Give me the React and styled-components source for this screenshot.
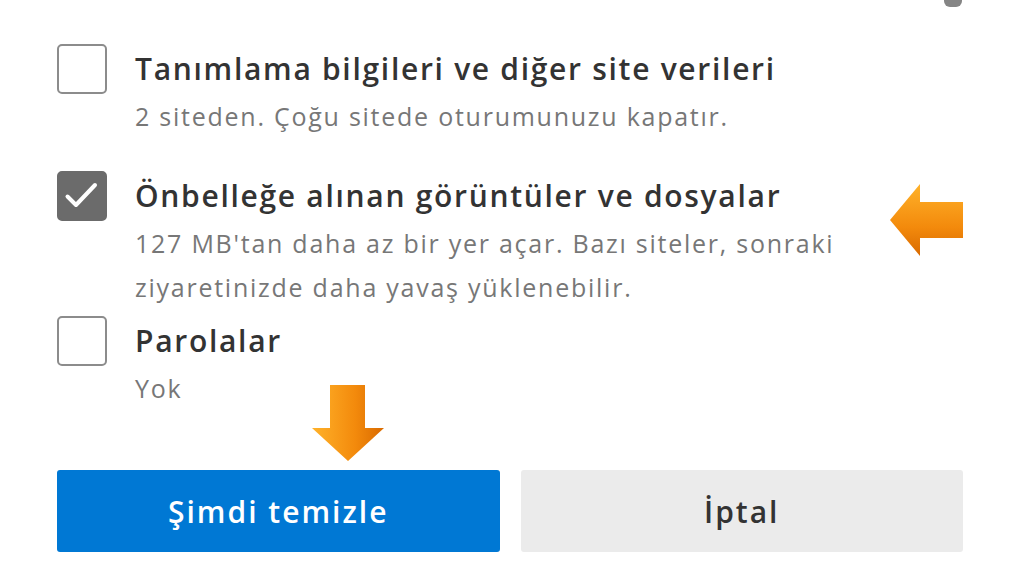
import React from "react";
import styled, { createGlobalStyle } from "styled-components";

const GlobalStyle = createGlobalStyle`
  html, body {
    margin: 0;
    padding: 0;
    background: #ffffff;
  }
  body {
    font-family: "Open Sans", "Noto Sans", "Liberation Sans", sans-serif;
  }
`;

const items = [
  {
    title: "Tanımlama bilgileri ve diğer site verileri",
    lines: ["2 siteden. Çoğu sitede oturumunuzu kapatır."],
    checked: false,
    space: 44,
  },
  {
    title: "Önbelleğe alınan görüntüler ve dosyalar",
    lines: [
      "127 MB'tan daha az bir yer açar. Bazı siteler, sonraki",
      "ziyaretinizde daha yavaş yüklenebilir.",
    ],
    checked: true,
    space: 33,
  },
  {
    title: "Parolalar",
    lines: ["Yok"],
    checked: false,
    space: 7,
  },
];

const App = () => {
  return (
    <>
      <GlobalStyle />
      <Page>
        <Dialog>
          <List>
            {items.map((item) => (
              <Row key={item.title} space={item.space}>
                <Check checked={item.checked}>
                  {item.checked && (
                    <svg width="40" height="40" viewBox="0 0 40 40">
                      <path
                        d="M5.5 20.5 L14 29 L33 9"
                        fill="none"
                        stroke="#ffffff"
                        strokeWidth="4"
                        strokeLinecap="round"
                        strokeLinejoin="round"
                      />
                    </svg>
                  )}
                </Check>
                <Texts>
                  <Title>{item.title}</Title>
                  {item.lines.map((line) => (
                    <Sub key={line}>{line}</Sub>
                  ))}
                </Texts>
              </Row>
            ))}
          </List>
          <Buttons>
            <Button primary>Şimdi temizle</Button>
            <Button>İptal</Button>
          </Buttons>
        </Dialog>

        <Corner />

        <LeftArrow width="76" height="76" viewBox="0 0 76 76">
          <defs>
            <linearGradient id="gl" x1="0" y1="0" x2="0" y2="1">
              <stop offset="0" stopColor="#ffb22a" />
              <stop offset="0.6" stopColor="#f38a0c" />
              <stop offset="1" stopColor="#d96a00" />
            </linearGradient>
          </defs>
          <path
            d="M2 37 L32 1 L32 19 L75 19 L75 55 L32 55 L32 73 Z"
            fill="url(#gl)"
          />
        </LeftArrow>

        <DownArrow width="76" height="78" viewBox="0 0 76 78">
          <defs>
            <linearGradient id="gd" x1="0" y1="0" x2="1" y2="0">
              <stop offset="0" stopColor="#ffb22a" />
              <stop offset="0.6" stopColor="#f38a0c" />
              <stop offset="1" stopColor="#d96a00" />
            </linearGradient>
          </defs>
          <path
            d="M19 1 L54 1 L54 44 L73 44 L37 77 L1 44 L19 44 Z"
            fill="url(#gd)"
          />
        </DownArrow>
      </Page>
    </>
  );
};

export default App;

const Page = styled.div`
  position: relative;
  width: 1024px;
  height: 576px;
  overflow: hidden;
  background: #ffffff;
`;

const Dialog = styled.div`
  width: 906px;
  padding-left: 57px;
  display: flex;
  flex-direction: column;
`;

const List = styled.div`
  display: flex;
  flex-direction: column;
`;

const Row = styled.div`
  display: flex;
  align-items: flex-start;
  gap: 28px;
  margin-top: ${({ space }) => space}px;
`;

const Check = styled.div`
  box-sizing: border-box;
  flex: none;
  width: 50px;
  height: 50px;
  border-radius: 5px;
  border: 2px solid ${({ checked }) => (checked ? "#6b6b6b" : "#8c8c8c")};
  background: ${({ checked }) => (checked ? "#6b6b6b" : "#ffffff")};
  display: flex;
  align-items: center;
  justify-content: center;
`;

const Texts = styled.div`
  display: flex;
  flex-direction: column;
`;

const Title = styled.div`
  font-size: 30px;
  font-weight: 600;
  letter-spacing: 1.7px;
  line-height: 50px;
  color: #333333;
  white-space: nowrap;
`;

const Sub = styled.div`
  font-size: 25px;
  letter-spacing: 1.75px;
  line-height: 44px;
  color: #777777;
  white-space: nowrap;
`;

const Buttons = styled.div`
  display: flex;
  gap: 21px;
  margin-top: 60px;
`;

const Button = styled.div`
  width: 443px;
  height: 82px;
  border-radius: 3px;
  display: flex;
  align-items: center;
  justify-content: center;
  font-size: 30px;
  font-weight: 600;
  letter-spacing: 2px;
  color: ${({ primary }) => (primary ? "#ffffff" : "#333333")};
  background: ${({ primary }) => (primary ? "#0078d4" : "#ebebeb")};
`;

const Corner = styled.div`
  position: absolute;
  top: 0;
  left: 944px;
  width: 18px;
  height: 7px;
  border-radius: 0 0 6px 6px;
  background: #666666;
  opacity: 0.8;
`;

const LeftArrow = styled.svg`
  position: absolute;
  left: 888px;
  top: 183px;
`;

const DownArrow = styled.svg`
  position: absolute;
  left: 311px;
  top: 384px;
`;
